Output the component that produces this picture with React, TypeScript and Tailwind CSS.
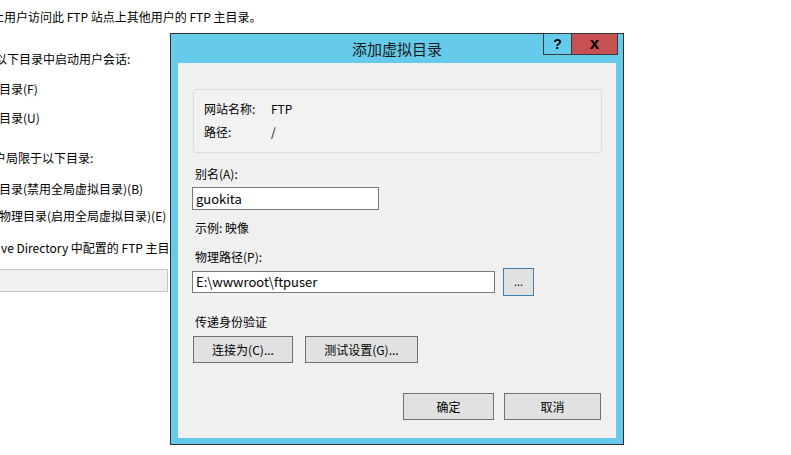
import React from "react";

const font = { fontFamily: '"Noto Sans CJK SC", "Liberation Sans", sans-serif' };

function BackgroundPage() {
  return (
    <div className="h-[455px] w-[791px] overflow-hidden bg-white text-[12px] leading-[16px] text-black">
      <div className="pt-[9px] ml-[-8px] whitespace-nowrap">止用户访问此 FTP 站点上其他用户的 FTP 主目录。</div>
      <div className="mt-[26px] ml-[-5px] whitespace-nowrap">以下目录中启动用户会话:</div>
      <div className="mt-[14px] ml-[-1px] whitespace-nowrap">目录(F)</div>
      <div className="mt-[13px] ml-[-1px] whitespace-nowrap">目录(U)</div>
      <div className="mt-[24px] ml-[-6px] whitespace-nowrap">户局限于以下目录:</div>
      <div className="mt-[15px] ml-[-1px] whitespace-nowrap">目录(禁用全局虚拟目录)(B)</div>
      <div className="mt-[11px] ml-[-1px] whitespace-nowrap">物理目录(启用全局虚拟目录)(E)</div>
      <div className="mt-[16px] ml-[1px] whitespace-nowrap">ve Directory 中配置的 FTP 主目录</div>
      <div className="mt-[13px] h-[23px] w-[168px] border border-l-0 border-[#c4c4c4] bg-[#f0f0f0]" />
    </div>
  );
}

function WinButton({ label, w }: { label: string; w: string }) {
  return (
    <button className={`${w} h-[27px] border border-[#707070] bg-[#e1e1e1] text-[12px] leading-[16px] text-black`}>
      {label}
    </button>
  );
}

function Dialog() {
  return (
    <div className="absolute left-[170px] top-[33px] flex h-[412px] w-[454px] flex-col border border-[#2f2f2f] bg-[#66cbea]">
      <div className="relative flex h-[29px] shrink-0 items-center justify-center">
        <span className="text-[15px] leading-[20px] text-[#1a1a1a]">添加虚拟目录</span>
        <div className="absolute right-[5px] top-[-1px] flex">
          <div className="flex h-[22px] w-[29px] items-center justify-center border border-[#3a3a3a] font-['Liberation_Sans'] text-[14px] font-bold leading-none text-black">
            ?
          </div>
          <div className="ml-[-1px] flex h-[22px] w-[47px] items-center justify-center border border-[#3a3a3a] bg-[#c75050] pb-[2px] font-['Liberation_Sans'] text-[17px] font-bold leading-none text-black">
            x
          </div>
        </div>
      </div>
      <div className="mx-[7px] mb-[6px] flex flex-1 flex-col bg-[#f0f0f0] pl-[15px] text-[12px] leading-[16px] text-black">
        <div className="mr-[14px] mt-[26px] h-[64px] rounded-[3px] border border-[#dcdcdc] bg-[#f2f2f2] pl-[10px] pt-[11px]">
          <div className="flex">
            <span className="w-[67px]">网站名称:</span>
            <span>FTP</span>
          </div>
          <div className="mt-[7px] flex">
            <span className="w-[67px]">路径:</span>
            <span>/</span>
          </div>
        </div>

        <div className="mt-[13px] ml-[2px]">别名(A):</div>
        <div className="mt-[5px] ml-[-1px] flex h-[23px] w-[187px] items-center border border-[#7a7a7a] bg-white pl-[3px] text-[13px]">
          guokita
        </div>

        <div className="mt-[10px] ml-[2px]">示例: 映像</div>

        <div className="mt-[13px] ml-[2px]">物理路径(P):</div>
        <div className="mt-[3px] ml-[-1px] flex items-center">
          <div className="flex h-[22px] w-[303px] items-center border border-[#7a7a7a] bg-white pl-[3px] text-[13px]">
            E:\wwwroot\ftpuser
          </div>
          <button className="ml-[8px] flex h-[28px] w-[31px] items-center justify-center border border-[#3c7fb1] bg-[#e1e1e1] pb-[2px] text-[11px] leading-none">
            ...
          </button>
        </div>

        <div className="mt-[18px] ml-[2px]">传递身份验证</div>
        <div className="mt-[6px] flex gap-[12px]">
          <WinButton label="连接为(C)..." w="w-[100px]" />
          <WinButton label="测试设置(G)..." w="w-[113px]" />
        </div>

        <div className="mt-[30px] mr-[15px] flex justify-end gap-[10px]">
          <WinButton label="确定" w="w-[91px]" />
          <WinButton label="取消" w="w-[97px]" />
        </div>
      </div>
    </div>
  );
}

export default function App() {
  return (
    <div className="relative h-[455px] w-[791px] overflow-hidden" style={font}>
      <BackgroundPage />
      <Dialog />
    </div>
  );
}
